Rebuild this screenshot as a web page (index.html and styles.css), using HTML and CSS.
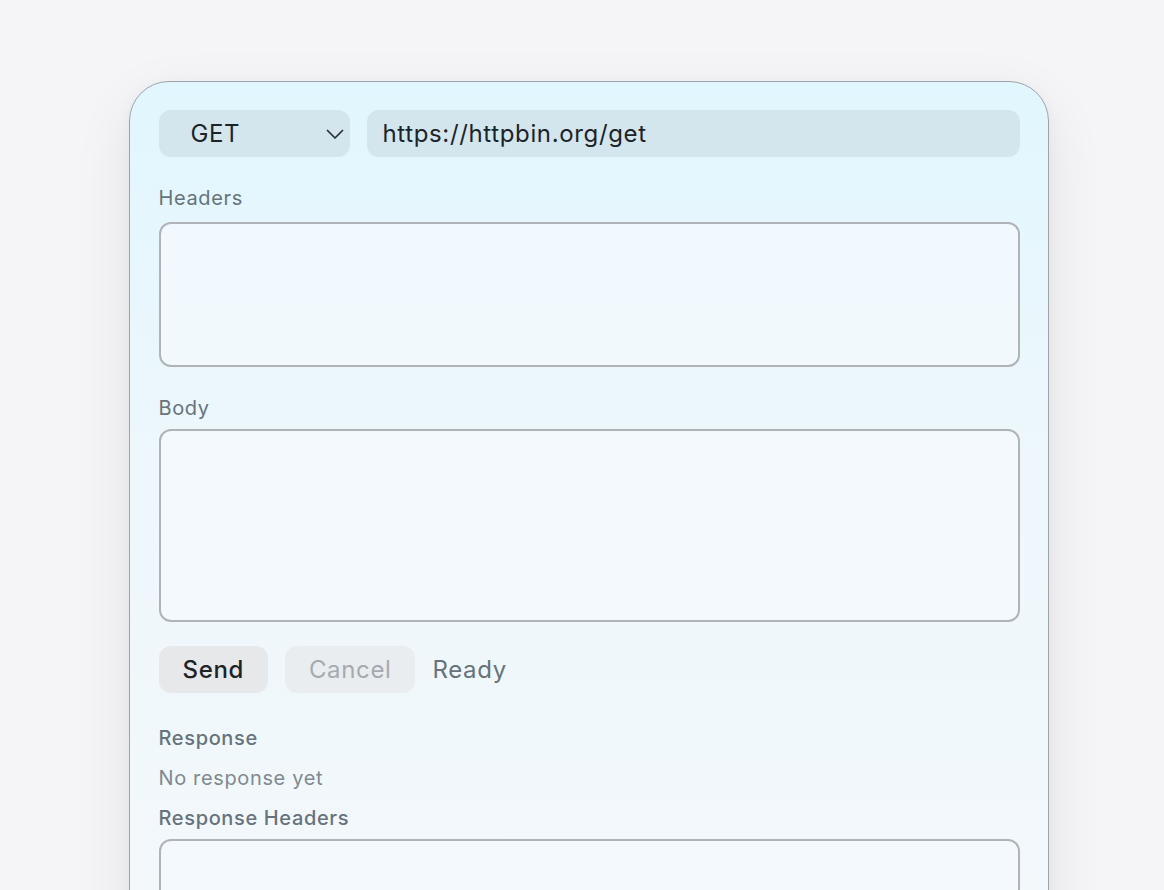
FILE: index.html
```html
<!DOCTYPE html>
<html lang="en">
<head>
  <meta charset="UTF-8" />
  <meta name="viewport" content="width=device-width, initial-scale=1.0"/>
  <title>HTTP Client</title>
  <link rel="stylesheet" href="styles.css">
</head>
<body>

  <div class="client-card">
    <div class="request-row">
      <div class="method-select">
        <span>GET</span>
        <svg class="chevron" width="18" height="18" viewBox="0 0 18 18" fill="none">
          <path d="M1.5 5.5l7.5 7.5 7.5-7.5" stroke="#2a2f33" stroke-width="1.7" stroke-linecap="round" stroke-linejoin="round"/>
        </svg>
      </div>
      <div class="url-input">https://httpbin.org/get</div>
    </div>

    <div class="field-label">Headers</div>
    <div class="text-box headers-box"></div>

    <div class="field-label body-label">Body</div>
    <div class="text-box body-box"></div>

    <div class="action-row">
      <button class="send-btn">Send</button>
      <button class="cancel-btn" disabled>Cancel</button>
      <span class="status">Ready</span>
    </div>

    <div class="field-label response-label">Response</div>
    <div class="empty-note">No response yet</div>
    <div class="field-label resp-headers-label">Response Headers</div>
    <div class="text-box resp-headers-box"></div>
  </div>

</body>
</html>
```

FILE: styles.css
```css
* {
  box-sizing: border-box;
  margin: 0;
  padding: 0;
}

body {
  font-family: Inter, 'Noto Sans', sans-serif;
  letter-spacing: 0.04em;
  background-color: #f5f5f7;
  color: #1d2326;
  height: 890px;
  overflow: hidden;
}

.client-card {
  width: 920px;
  margin: 81px 0 0 129px;
  padding: 28px 28.5px 40px 28.5px;
  border: 1.5px solid #9ca3a9;
  border-radius: 40px;
  background: linear-gradient(180deg, #e1f6fe 0%, #edf7fc 40%, #f4f8fb 100%);
  box-shadow: 0 20px 60px rgba(0, 0, 0, 0.08), 0 4px 16px rgba(0, 0, 0, 0.04);
  min-height: 900px;
}

.request-row {
  display: flex;
  gap: 17px;
}

.method-select {
  width: 191px;
  height: 47px;
  border-radius: 12px;
  background-color: #d3e6ee;
  display: flex;
  align-items: center;
  justify-content: space-between;
  padding: 0 6px 0 32px;
  font-size: 24px;
}

.chevron {
  margin-top: 1px;
}

.url-input {
  flex: 1;
  height: 47px;
  border-radius: 12px;
  background-color: #d3e6ee;
  display: flex;
  align-items: center;
  padding: 0 16px;
  font-size: 24px;
}

.field-label {
  font-size: 20px;
  line-height: 24px;
  color: #66737b;
  margin-top: 29px;
  margin-bottom: 12px;
}

.body-label {
  margin-top: 29px;
  margin-bottom: 9px;
}

.text-box {
  border: 2px solid #b0b4b8;
  border-radius: 12px;
  background-color: rgba(244, 249, 253, 0.75);
}

.headers-box {
  height: 145px;
}

.body-box {
  height: 193px;
}

.action-row {
  display: flex;
  align-items: center;
  margin-top: 24px;
}

.action-row button {
  height: 47px;
  border: none;
  border-radius: 12px;
  font-family: inherit;
  letter-spacing: inherit;
  font-size: 24px;
  padding: 0 24px;
}

.send-btn {
  background-color: #e7e8ea;
  color: #1d2326;
  font-weight: 500;
}

.cancel-btn {
  margin-left: 17px;
  background-color: #eaedef;
  color: #a3abb1;
}

.status {
  margin-left: 17px;
  font-size: 24px;
  color: #66737b;
}

.response-label {
  margin-top: 33px;
  margin-bottom: 16px;
  font-weight: 500;
}

.empty-note {
  font-size: 20px;
  line-height: 24px;
  color: #80898f;
}

.resp-headers-label {
  margin-top: 16px;
  margin-bottom: 9px;
  font-weight: 500;
}

.resp-headers-box {
  height: 120px;
}
```
